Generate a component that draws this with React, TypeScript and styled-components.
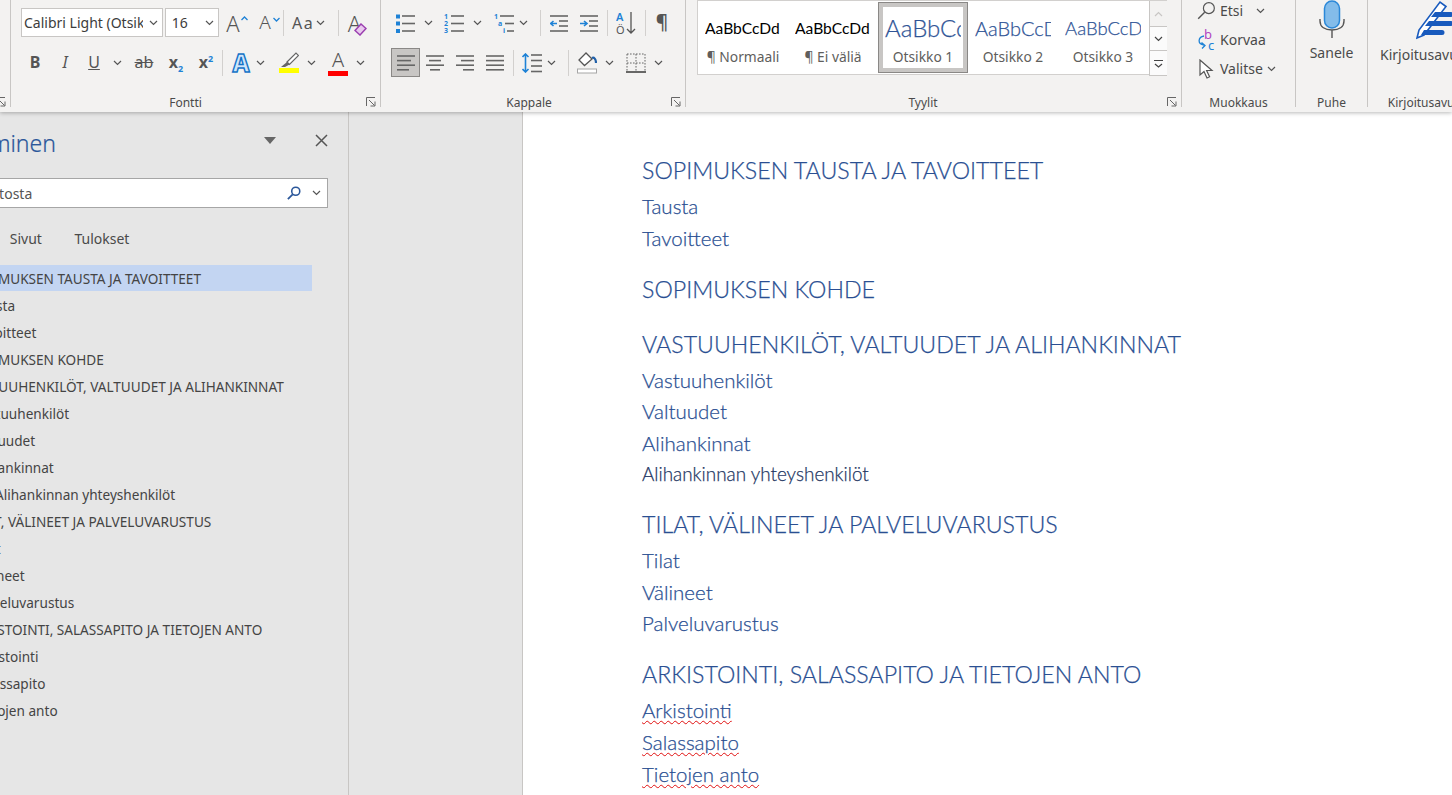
import React from "react"
import styled, { createGlobalStyle } from "styled-components"

const ui = `"Noto Sans", "Open Sans", sans-serif`
const doc = `Lato, "Liberation Sans", sans-serif`
const grey = "#666"
const blue = "#1e82d6"

const Global = createGlobalStyle`
  html, body { margin: 0; height: 100%; overflow: hidden; background: #e6e6e6; }
`

const Shell = styled.div`
  width: 1452px;
  height: 795px;
  display: flex;
  flex-direction: column;
  overflow: hidden;
  font-family: ${ui};
`

// ribbon
const Ribbon = styled.div`
  height: 112px;
  flex: none;
  display: flex;
  background: #f3f2f1;
  box-shadow: 0 1px 4px rgba(0, 0, 0, 0.28);
  position: relative;
  z-index: 2;
  overflow: hidden;
`
const Group = styled.div<{ $w: number; $pl?: number }>`
  width: ${(p) => p.$w}px;
  flex: none;
  box-sizing: border-box;
  height: 107px;
  padding-left: ${(p) => p.$pl ?? 0}px;
  border-right: 1px solid #c8c6c4;
  display: flex;
  flex-direction: column;
  position: relative;
`
const GroupLabel = styled.div<{ $pr?: number }>`
  margin-top: auto;
  margin-bottom: -3px;
  height: 15px;
  line-height: 15px;
  font-size: 12px;
  color: #4a4a4a;
  text-align: center;
  white-space: nowrap;
  padding-right: ${(p) => p.$pr ?? 0}px;
`
const Launcher = styled.svg`
  position: absolute;
  right: 4px;
  bottom: 0;
  width: 10px;
  height: 10px;
`
const Rows = styled.div`
  padding-top: 8px;
  display: flex;
  flex-direction: column;
  gap: 11px;
`
const Row = styled.div`
  height: 29px;
  display: flex;
  align-items: center;
`
const Tool = styled.div<{ $w: number; $ml?: number }>`
  width: ${(p) => p.$w}px;
  margin-left: ${(p) => p.$ml ?? 0}px;
  flex: none;
  display: flex;
  flex-direction: column;
  align-items: center;
  justify-content: center;
  color: #555;
  position: relative;
  svg { display: block; }
`
const Selected = styled(Tool)`
  height: 29px;
  box-sizing: border-box;
  background: #c8c6c4;
  border: 1px solid #8a8886;
`
const Sep = styled.div<{ $ml: number }>`
  width: 1px;
  height: 26px;
  flex: none;
  margin-left: ${(p) => p.$ml}px;
  background: #d2d0ce;
`
const Select = styled.div<{ $w: number; $ml?: number }>`
  width: ${(p) => p.$w}px;
  margin-left: ${(p) => p.$ml ?? 0}px;
  height: 29px;
  flex: none;
  box-sizing: border-box;
  background: #fff;
  border: 1px solid #c8c6c4;
  display: flex;
  align-items: center;
  justify-content: space-between;
  padding: 0 4px 0 2px;
  font-size: 14px;
  color: #3c3c3c;
  overflow: hidden;
  white-space: nowrap;
  span { overflow: hidden; flex: 1; }
  svg { flex: none; margin-left: 6px; }
`
const GlyphA = styled.span<{ $size: number; $weight?: number; $mr?: number }>`
  font-size: ${(p) => p.$size}px;
  font-weight: ${(p) => p.$weight ?? 300};
  line-height: 1;
  color: #555;
  margin-right: ${(p) => p.$mr ?? 0}px;
`
const Caret = styled.svg`
  position: absolute;
  right: 0;
  top: 4px;
`
const CaseBtn = styled.div`
  display: flex;
  align-items: center;
  justify-content: space-between;
  width: 100%;
  font-size: 16px;
  letter-spacing: 1.5px;
  color: #555;
`
const StyledLetter = styled.span<{ $bold?: boolean; $italic?: boolean; $under?: boolean; $strike?: boolean }>`
  font-size: 16px;
  line-height: 1;
  margin-top: -2px;
  color: #555;
  font-family: "Noto Sans", sans-serif;
  font-weight: ${(p) => (p.$bold ? 700 : 400)};
  font-style: ${(p) => (p.$italic ? "italic" : "normal")};
  text-decoration: ${(p) => (p.$under ? "underline" : p.$strike ? "line-through" : "none")};
  sub, sup { color: ${blue}; font-size: 9px; line-height: 0; }
`
const EffectA = styled.span`
  font-size: 24px;
  line-height: 1;
  font-weight: 800;
  color: #cfe6fa;
  -webkit-text-stroke: 1.4px #1473c7;
`
const ColorBar = styled.div<{ $c: string }>`
  width: 20px;
  height: 5px;
  background: ${(p) => p.$c};
  margin-top: 1px;
`
const Pilcrow = styled.span`
  font-size: 19px;
  font-weight: 600;
  line-height: 1;
  color: #555;
  margin-right: 4px;
`

// style gallery
const Gallery = styled.div`
  width: 470px;
  height: 75px;
  box-sizing: border-box;
  background: #fff;
  border: 1px solid #d2d0ce;
  display: flex;
  padding-top: 1px;
`
const StyleItem = styled.div<{ $on?: boolean }>`
  width: 90px;
  height: 71px;
  flex: none;
  box-sizing: border-box;
  display: flex;
  flex-direction: column;
  align-items: center;
  overflow: hidden;
  border: ${(p) => (p.$on ? "1px solid #8a8886" : "1px solid transparent")};
  box-shadow: ${(p) => (p.$on ? "inset 0 0 0 4px #c8c6c4" : "none")};
`
const Preview = styled.div<{ $c: string; $size: number; $weight?: number }>`
  height: 44px;
  width: 76px;
  overflow: hidden;
  display: flex;
  align-items: center;
  white-space: nowrap;
  font-family: ${doc};
  font-weight: ${(p) => p.$weight ?? 400};
  font-size: ${(p) => p.$size}px;
  color: ${(p) => p.$c};
  padding-top: 5px;
  box-sizing: border-box;
  -webkit-text-stroke: ${(p) => (p.$weight ? "0.25px" : "0")};
`
const StyleName = styled.div`
  font-size: 13.8px;
  line-height: 20px;
  color: #605e5c;
  white-space: nowrap;
`
const ScrollCol = styled.div`
  width: 18px;
  margin-left: 1px;
  flex: none;
  display: flex;
  flex-direction: column;
  margin-top: -1px;
`
const ScrollBtn = styled.div<{ $h: number; $muted?: boolean }>`
  height: ${(p) => p.$h}px;
  flex: none;
  box-sizing: border-box;
  border-left: 1px solid #c8c6c4;
  border-bottom: 1px solid #c8c6c4;
  background: ${(p) => (p.$muted ? "#f3f2f1" : "#fbfbfb")};
  display: flex;
  align-items: center;
  justify-content: center;
`

// edit + voice groups
const EditCol = styled.div`
  display: flex;
  flex-direction: column;
  margin-top: -4px;
  padding-left: 15px;
`
const EditRow = styled.div`
  height: 29px;
  display: flex;
  align-items: center;
  font-size: 14px;
  color: #4a4a4a;
  svg { flex: none; }
`
const EditText = styled.span<{ $gap?: number }>`
  margin-left: 4px;
  margin-right: ${(p) => p.$gap ?? 0}px;
`
const BigBtn = styled.div`
  display: flex;
  flex-direction: column;
  align-items: center;
  font-size: 14px;
  color: #4a4a4a;
  white-space: nowrap;
`
const BigText = styled.div`
  line-height: 20px;
  margin-top: 5px;
`

// lower part of the window
const Workspace = styled.div`
  flex: 1;
  display: flex;
  min-height: 0;
`
const NavPane = styled.aside`
  width: 349px;
  flex: none;
  box-sizing: border-box;
  border-right: 1px solid #c8c6c4;
  background: #e6e6e6;
  overflow: hidden;
`
const NavInner = styled.div`
  margin-left: -90px;
  width: 438px;
  box-sizing: border-box;
  padding-top: 15px;
`
const NavHead = styled.div`
  height: 32px;
  display: flex;
  align-items: center;
  position: relative;
`
const NavTitle = styled.div`
  margin-left: 29px;
  font-size: 23px;
  font-weight: 300;
  color: #2b579a;
  white-space: nowrap;
  -webkit-text-stroke: 0.2px #2b579a;
`
const NavActions = styled.div`
  margin-left: auto;
  margin-right: 20px;
  display: flex;
  align-items: center;
  gap: 38px;
  margin-top: -6px;
`
const SearchBox = styled.div`
  margin: 19px 20px 0 0;
  height: 30px;
  box-sizing: border-box;
  background: #fff;
  border: 1px solid #a6a6a6;
  display: flex;
  align-items: center;
  padding: 0 6px 0 18px;
  font-size: 14px;
  color: #555;
`
const SearchIcons = styled.div`
  margin-left: auto;
  display: flex;
  align-items: center;
  gap: 11px;
`
const Tabs = styled.div`
  margin-top: 15px;
  height: 30px;
  display: flex;
  align-items: center;
  padding-left: 20px;
  gap: 32.5px;
  font-size: 14px;
  color: #4a4a4a;
`
const Tree = styled.div`
  margin-top: 12px;
  margin-right: 36px;
`
const levelPad = [57, 63.5, 85]
const TreeRow = styled.div<{ $level: number; $on?: boolean }>`
  height: 26px;
  margin-bottom: 1px;
  line-height: 27px;
  font-size: 13.6px;
  color: #444;
  white-space: nowrap;
  padding-left: ${(p) => levelPad[p.$level - 1]}px;
  background: ${(p) => (p.$on ? "#c3d5f2" : "transparent")};
`
const Gutter = styled.div`
  width: 173px;
  flex: none;
  background: #e6e6e6;
`
const Page = styled.main`
  flex: 1;
  background: #fff;
  border-left: 1px solid #c8c6c4;
  padding: 38px 0 0 119px;
  overflow: hidden;
`
const H1 = styled.div`
  height: 40px;
  line-height: 40px;
  margin-top: 15px;
  font-family: ${doc};
  font-size: 23.2px;
  font-weight: 300;
  color: #2a4f92;
  -webkit-text-stroke: 0.25px #2a4f92;
  white-space: nowrap;
  &:first-child { margin-top: 0; }
`
const H2 = styled.div<{ $spell?: boolean }>`
  height: 31.75px;
  line-height: 32px;
  font-family: ${doc};
  font-size: 20.5px;
  font-weight: 300;
  color: #2a4f92;
  -webkit-text-stroke: 0.25px #2a4f92;
  span {
    text-decoration: ${(p) => (p.$spell ? "underline wavy #e01010 1.2px" : "none")};
    text-underline-offset: 2px;
  }
`
const H3 = styled.div`
  height: 30px;
  line-height: 30px;
  font-family: ${doc};
  font-size: 18.9px;
  font-weight: 300;
  color: #1f3763;
  -webkit-text-stroke: 0.25px #1f3763;
`

// icons
const Chev = ({ c = "#555" }: { c?: string }) => (
  <svg width="9" height="6" viewBox="0 0 9 6">
    <path d="M1 1l3.5 3.5L8 1" fill="none" stroke={c} strokeWidth="1.2" />
  </svg>
)
const Launch = () => (
  <Launcher viewBox="0 0 10 10">
    <path d="M.5 9V.5H9" fill="none" stroke="#666" />
    <path d="M3 3l5.5 5.5M9 4.5V9H4.5" fill="none" stroke="#666" />
  </Launcher>
)
const Lines = ({ rows }: { rows: [number, number, number][] }) => (
  <>
    {rows.map(([x1, x2, y], i) => (
      <path key={i} d={`M${x1} ${y}H${x2}`} stroke={grey} strokeWidth="1.6" />
    ))}
  </>
)
const Bullets = () => (
  <svg width="20" height="20" viewBox="0 0 20 20">
    <rect x="1" y="1.5" width="4" height="4" fill={blue} />
    <rect x="1" y="8.5" width="4" height="4" fill={blue} />
    <rect x="1" y="16" width="4" height="4" fill={blue} />
    <Lines rows={[[7, 20, 3], [7, 20, 10.5], [7, 20, 18]]} />
  </svg>
)
const Numbered = () => (
  <svg width="20" height="20" viewBox="0 0 20 20" fontFamily="Noto Sans" fontSize="7" fontWeight="700" fill={blue}>
    <text x="0" y="6">1</text>
    <text x="0" y="13">2</text>
    <text x="0" y="20">3</text>
    <Lines rows={[[7, 20, 3], [7, 20, 10.5], [7, 20, 18]]} />
  </svg>
)
const Multi = () => (
  <svg width="20" height="20" viewBox="0 0 20 20" fontFamily="Noto Sans" fontSize="7" fontWeight="700" fill={blue}>
    <text x="0" y="6">1</text>
    <text x="4" y="13">a</text>
    <text x="9" y="20">i</text>
    <Lines rows={[[6, 20, 3], [11, 20, 10.5], [13, 20, 18]]} />
  </svg>
)
const Indent = ({ right }: { right?: boolean }) => (
  <svg width="18" height="20" viewBox="0 0 18 20">
    <Lines rows={[[0, 18, 3], [9, 18, 8], [9, 18, 13], [0, 18, 18]]} />
    <path
      d={right ? "M0 10.5h6M4 8l3 2.5L4 13" : "M7 10.5H1M3.5 8l-3 2.5 3 2.5"}
      fill="none"
      stroke={blue}
      strokeWidth="1.6"
    />
  </svg>
)
const Sort = () => (
  <svg width="20" height="24" viewBox="0 0 20 24" fontFamily="Noto Sans" fontSize="11">
    <text x="0" y="10" fill={blue} fontWeight="600">A</text>
    <text x="0" y="23" fill="#555">Ö</text>
    <path d="M15 1v21M11 18l4 4 4-4" fill="none" stroke="#555" strokeWidth="1.3" />
  </svg>
)
const Align = ({ rows }: { rows: [number, number][] }) => (
  <svg width="20" height="18" viewBox="0 0 20 18">
    <Lines rows={rows.map(([a, b], i) => [a, b, 2 + i * 4.6] as [number, number, number])} />
  </svg>
)
const LineSpacing = () => (
  <svg width="20" height="20" viewBox="0 0 20 20">
    <path d="M3.5 1v18M.5 4l3-3 3 3M.5 16l3 3 3-3" fill="none" stroke={blue} strokeWidth="1.6" />
    <Lines rows={[[9, 20, 2], [9, 20, 7.5], [9, 20, 13], [9, 20, 18.5]]} />
  </svg>
)
const Shading = () => (
  <svg width="20" height="22" viewBox="0 0 20 22">
    <path d="M9 1l-7 7 5.5 5.5L15 7z" fill="#fff" stroke="#555" strokeWidth="1.3" />
    <path d="M15 6c2-1 4 1 4 5" fill="none" stroke="#1f5fa8" strokeWidth="2.2" />
    <rect x=".5" y="17" width="19" height="4" fill="#fff" stroke="#a6a6a6" />
  </svg>
)
const Borders = () => (
  <svg width="20" height="20" viewBox="0 0 20 20">
    <path d="M1 1h18v18M1 1v18M10 1v18M1 10h18" fill="none" stroke="#666" strokeDasharray="1.6 1.4" />
    <path d="M0 19h20" stroke="#444" strokeWidth="1.6" />
  </svg>
)
const Eraser = () => (
  <svg width="13" height="13" viewBox="0 0 13 13" style={{ position: "absolute", right: 0, bottom: -2 }}>
    <path d="M7 1l5 4.5L6 12 1 7.5z" fill="#e8c9ee" stroke="#9b3fb0" strokeWidth="1.5" />
  </svg>
)
const Marker = () => (
  <svg width="20" height="15" viewBox="0 0 20 15">
    <path d="M8 10l9-9 2.5 2.5-9 9z" fill="#fff" stroke="#666" strokeWidth="1.2" />
    <path d="M8 10l2.5 2.5L6 15H2z" fill="#666" />
  </svg>
)
const Lens = ({ c, size }: { c: string; size: number }) => (
  <svg width={size} height={size} viewBox="0 0 16 16">
    <circle cx="10" cy="6" r="4.6" fill="none" stroke={c} strokeWidth={size > 15 ? 1 : 1.8} />
    <path d="M6.5 9.5L1 15" stroke={c} strokeWidth={size > 15 ? 1.2 : 2} />
  </svg>
)
const Replace = () => (
  <svg width="19" height="22" viewBox="0 0 19 22" fontFamily="Noto Sans" fontSize="13">
    <text x="7" y="10" fill="#b146c2">b</text>
    <text x="11" y="21" fill="#1e82d6">c</text>
    <path d="M7 7C1 8 0 15 7 16M4.5 13.5L8 16.5l-3 3" fill="none" stroke="#1e82d6" strokeWidth="1.3" />
  </svg>
)
const Pointer = () => (
  <svg width="19" height="20" viewBox="0 0 19 20">
    <path d="M3 1v15l4-3.5 3 6.5 2.6-1.2-3-6.3H15z" fill="#fff" stroke="#555" strokeWidth="1.2" />
  </svg>
)
const Mic = () => (
  <svg width="26" height="38" viewBox="0 0 26 38">
    <rect x="5.5" y="1" width="15" height="27" rx="7.5" fill="#83bcea" stroke="#2b88d8" strokeWidth="1.5" />
    <path d="M1 19v2c0 6 5 9 12 9s12-3 12-9v-2M13 30v8" fill="none" stroke="#555" strokeWidth="1.4" />
  </svg>
)
const Pen = () => (
  <svg width="38" height="40" viewBox="0 0 38 40">
    <path d="M1 38l2-8L24 2l6 4.5L8 35z" fill="#fff" stroke="#185abd" strokeWidth="1.6" />
    <path d="M19 12h16a2.5 2.5 0 010 5H15zM13 21h22a2.5 2.5 0 010 5H9zM8 30h18a2.5 2.5 0 010 5H5z" fill="#185abd" />
  </svg>
)

const treeItems: [number, string][] = [
  [1, "SOPIMUKSEN TAUSTA JA TAVOITTEET"],
  [2, "Tausta"],
  [2, "Tavoitteet"],
  [1, "SOPIMUKSEN KOHDE"],
  [1, "VASTUUHENKILÖT, VALTUUDET JA ALIHANKINNAT"],
  [2, "Vastuuhenkilöt"],
  [2, "Valtuudet"],
  [2, "Alihankinnat"],
  [3, "Alihankinnan yhteyshenkilöt"],
  [1, "TILAT, VÄLINEET JA PALVELUVARUSTUS"],
  [2, "Tilat"],
  [2, "Välineet"],
  [2, "Palveluvarustus"],
  [1, "ARKISTOINTI, SALASSAPITO JA TIETOJEN ANTO"],
  [2, "Arkistointi"],
  [2, "Salassapito"],
  [2, "Tietojen anto"],
]

const FontGroup = () => (
  <Group $w={370} $pl={10}>
    <Rows>
      <Row>
        <Select $w={142}>
          <span>Calibri Light (Otsikot)</span>
          <Chev />
        </Select>
        <Select $w={54} $ml={2}>
          <span>&nbsp;16</span>
          <Chev />
        </Select>
        <Tool $w={24} $ml={5}>
          <GlyphA $size={22} $mr={6}>A</GlyphA>
          <Caret width="7" height="5" viewBox="0 0 7 5">
            <path d="M.5 4l3-3 3 3" fill="none" stroke={blue} strokeWidth="1.3" />
          </Caret>
        </Tool>
        <Tool $w={24} $ml={8}>
          <GlyphA $size={19} $mr={6}>A</GlyphA>
          <Caret width="7" height="5" viewBox="0 0 7 5">
            <path d="M.5 1l3 3 3-3" fill="none" stroke={blue} strokeWidth="1.3" />
          </Caret>
        </Tool>
        <Sep $ml={3} />
        <Tool $w={33} $ml={8}>
          <CaseBtn>
            Aa
            <Chev />
          </CaseBtn>
        </Tool>
        <Sep $ml={13} />
        <Tool $w={20} $ml={8}>
          <GlyphA $size={22} $mr={5}>A</GlyphA>
          <Eraser />
        </Tool>
      </Row>
      <Row>
        <Tool $w={28}><StyledLetter $bold>B</StyledLetter></Tool>
        <Tool $w={28} $ml={2}><StyledLetter $italic>I</StyledLetter></Tool>
        <Tool $w={26} $ml={2}><StyledLetter $under>U</StyledLetter></Tool>
        <Tool $w={10} $ml={5}><Chev /></Tool>
        <Tool $w={24} $ml={10}><StyledLetter $strike>ab</StyledLetter></Tool>
        <Tool $w={24} $ml={8}><StyledLetter $bold>x<sub>2</sub></StyledLetter></Tool>
        <Tool $w={24} $ml={6}><StyledLetter $bold>x<sup>2</sup></StyledLetter></Tool>
        <Sep $ml={4} />
        <Tool $w={20} $ml={8}><EffectA>A</EffectA></Tool>
        <Tool $w={10} $ml={4}><Chev /></Tool>
        <Tool $w={20} $ml={14}>
          <Marker />
          <ColorBar $c="#ffff00" />
        </Tool>
        <Tool $w={10} $ml={7}><Chev /></Tool>
        <Tool $w={20} $ml={12}>
          <GlyphA $size={20}>A</GlyphA>
          <ColorBar $c="#ff0000" />
        </Tool>
        <Tool $w={10} $ml={7}><Chev /></Tool>
      </Row>
    </Rows>
    <GroupLabel $pr={30}>Fontti</GroupLabel>
    <Launch />
  </Group>
)

const ParagraphGroup = () => (
  <Group $w={305} $pl={10}>
    <Rows>
      <Row>
        <Tool $w={20} $ml={4}><Bullets /></Tool>
        <Tool $w={10} $ml={8}><Chev /></Tool>
        <Tool $w={20} $ml={11}><Numbered /></Tool>
        <Tool $w={10} $ml={8}><Chev /></Tool>
        <Tool $w={20} $ml={12}><Multi /></Tool>
        <Tool $w={10} $ml={4}><Chev /></Tool>
        <Sep $ml={12} />
        <Tool $w={18} $ml={9}><Indent /></Tool>
        <Tool $w={18} $ml={12}><Indent right /></Tool>
        <Sep $ml={9} />
        <Tool $w={20} $ml={8}><Sort /></Tool>
        <Sep $ml={9} />
        <Tool $w={16} $ml={10}><Pilcrow>¶</Pilcrow></Tool>
      </Row>
      <Row>
        <Selected $w={29}><Align rows={[[1, 19], [1, 15], [1, 19], [1, 13]]} /></Selected>
        <Tool $w={20} $ml={5}><Align rows={[[1, 19], [4, 16], [1, 19], [5, 15]]} /></Tool>
        <Tool $w={20} $ml={10}><Align rows={[[1, 19], [6, 19], [1, 19], [8, 19]]} /></Tool>
        <Tool $w={20} $ml={10}><Align rows={[[1, 19], [1, 19], [1, 19], [1, 19]]} /></Tool>
        <Sep $ml={8} />
        <Tool $w={20} $ml={8}><LineSpacing /></Tool>
        <Tool $w={10} $ml={4}><Chev /></Tool>
        <Sep $ml={12} />
        <Tool $w={20} $ml={8}><Shading /></Tool>
        <Tool $w={10} $ml={7}><Chev /></Tool>
        <Tool $w={20} $ml={12}><Borders /></Tool>
        <Tool $w={10} $ml={7}><Chev /></Tool>
      </Row>
    </Rows>
    <GroupLabel $pr={18}>Kappale</GroupLabel>
    <Launch />
  </Group>
)

const StylesGroup = () => (
  <Group $w={496} $pl={11}>
    <Gallery>
      <StyleItem>
        <Preview $c="#000" $size={15.6}>AaBbCcDd</Preview>
        <StyleName>¶ Normaali</StyleName>
      </StyleItem>
      <StyleItem>
        <Preview $c="#000" $size={15.6}>AaBbCcDd</Preview>
        <StyleName>¶ Ei väliä</StyleName>
      </StyleItem>
      <StyleItem $on>
        <Preview $c="#2f5496" $size={24} $weight={300}>AaBbCcDd</Preview>
        <StyleName>Otsikko 1</StyleName>
      </StyleItem>
      <StyleItem>
        <Preview $c="#2f5496" $size={20} $weight={300}>AaBbCcDd</Preview>
        <StyleName>Otsikko 2</StyleName>
      </StyleItem>
      <StyleItem>
        <Preview $c="#2f5496" $size={18.5} $weight={300}>AaBbCcDd</Preview>
        <StyleName>Otsikko 3</StyleName>
      </StyleItem>
      <ScrollCol>
        <ScrollBtn $h={26} $muted>
          <svg width="9" height="6" viewBox="0 0 9 6"><path d="M1 5l3.5-3.5L8 5" fill="none" stroke="#c8c6c4" strokeWidth="1.2" /></svg>
        </ScrollBtn>
        <ScrollBtn $h={24}><Chev c="#444" /></ScrollBtn>
        <ScrollBtn $h={25}>
          <svg width="9" height="9" viewBox="0 0 9 9"><path d="M0 1.5h9M1 5l3.5 3L8 5" fill="none" stroke="#444" strokeWidth="1.2" /></svg>
        </ScrollBtn>
      </ScrollCol>
    </Gallery>
    <GroupLabel $pr={32}>Tyylit</GroupLabel>
    <Launch />
  </Group>
)

const EditGroup = () => (
  <Group $w={114}>
    <EditCol>
      <EditRow>
        <Lens c="#555" size={19} />
        <EditText $gap={13}>Etsi</EditText>
        <Chev />
      </EditRow>
      <EditRow>
        <Replace />
        <EditText>Korvaa</EditText>
      </EditRow>
      <EditRow>
        <Pointer />
        <EditText $gap={4}>Valitse</EditText>
        <Chev />
      </EditRow>
    </EditCol>
    <GroupLabel>Muokkaus</GroupLabel>
  </Group>
)

const App = () => (
  <Shell>
    <Global />
    <Ribbon>
      <Group $w={11}>
        <Launch />
      </Group>
      <FontGroup />
      <ParagraphGroup />
      <StylesGroup />
      <EditGroup />
      <Group $w={72}>
        <BigBtn>
          <Mic />
          <BigText>Sanele</BigText>
        </BigBtn>
        <GroupLabel>Puhe</GroupLabel>
      </Group>
      <Group $w={134}>
        <BigBtn>
          <Pen />
          <BigText>Kirjoitusavustaja</BigText>
        </BigBtn>
        <GroupLabel>Kirjoitusavustaja</GroupLabel>
      </Group>
    </Ribbon>
    <Workspace>
      <NavPane>
        <NavInner>
          <NavHead>
            <NavTitle>Siirtyminen</NavTitle>
            <NavActions>
              <svg width="14" height="7" viewBox="0 0 14 7"><path d="M1 0h12L7 7z" fill="#666" /></svg>
              <svg width="13" height="13" viewBox="0 0 13 13"><path d="M1 1l11 11M12 1L1 12" stroke="#555" strokeWidth="1.5" /></svg>
            </NavActions>
          </NavHead>
          <SearchBox>
            Hae tiedostosta
            <SearchIcons>
              <Lens c="#2b579a" size={14} />
              <Chev />
            </SearchIcons>
          </SearchBox>
          <Tabs>
            <span>Otsikot</span>
            <span>Sivut</span>
            <span>Tulokset</span>
          </Tabs>
          <Tree>
            {treeItems.map(([level, text], i) => (
              <TreeRow key={i} $level={level} $on={i === 0}>{text}</TreeRow>
            ))}
          </Tree>
        </NavInner>
      </NavPane>
      <Gutter />
      <Page>
        <H1>SOPIMUKSEN TAUSTA JA TAVOITTEET</H1>
        <H2><span>Tausta</span></H2>
        <H2><span>Tavoitteet</span></H2>
        <H1>SOPIMUKSEN KOHDE</H1>
        <H1>VASTUUHENKILÖT, VALTUUDET JA ALIHANKINNAT</H1>
        <H2><span>Vastuuhenkilöt</span></H2>
        <H2><span>Valtuudet</span></H2>
        <H2><span>Alihankinnat</span></H2>
        <H3>Alihankinnan yhteyshenkilöt</H3>
        <H1>TILAT, VÄLINEET JA PALVELUVARUSTUS</H1>
        <H2><span>Tilat</span></H2>
        <H2><span>Välineet</span></H2>
        <H2><span>Palveluvarustus</span></H2>
        <H1>ARKISTOINTI, SALASSAPITO JA TIETOJEN ANTO</H1>
        <H2 $spell><span>Arkistointi</span></H2>
        <H2 $spell><span>Salassapito</span></H2>
        <H2 $spell><span>Tietojen anto</span></H2>
      </Page>
    </Workspace>
  </Shell>
)

export default App
